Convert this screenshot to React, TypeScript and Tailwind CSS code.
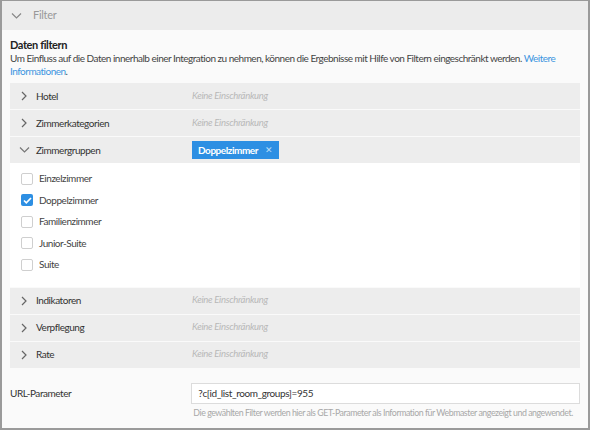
import React from "react";

const font = { fontFamily: "Lato, 'Liberation Sans', sans-serif" };

function ChevronRight() {
  return (
    <svg width="8" height="10" viewBox="0 0 8 10" className="shrink-0">
      <path d="M2 1l4 4-4 4" fill="none" stroke="#666" strokeWidth="1.2" />
    </svg>
  );
}

function ChevronDown({ color = "#666" }: { color?: string }) {
  return (
    <svg width="11" height="8" viewBox="0 0 11 8" className="shrink-0">
      <path d="M1 1.5l4.5 4.5 4.5-4.5" fill="none" stroke={color} strokeWidth="1.2" />
    </svg>
  );
}

function Row({ label, open, children }: { label: string; open?: boolean; children?: React.ReactNode }) {
  return (
    <div className="flex h-[26px] items-center bg-[#ededed]">
      <div className="flex w-[26px] justify-center pl-[2px]">{open ? <ChevronDown color="#777" /> : <ChevronRight />}</div>
      <div className="w-[156px] text-[10px] tracking-[-0.45px] text-[#333]">{label}</div>
      {children ?? <div className="text-[9.5px] italic tracking-[-0.3px] text-[#b8b8b8]">Keine Einschränkung</div>}
    </div>
  );
}

function Check({ label, checked }: { label: string; checked?: boolean }) {
  return (
    <div className="flex h-[21.5px] items-center gap-[6px] pl-[11px]">
      {checked ? (
        <div className="flex h-[12px] w-[12px] items-center justify-center rounded-[2px] bg-[#2d8fe3]">
          <svg width="9" height="7" viewBox="0 0 9 7">
            <path d="M1 3.5l2.3 2.3L8 1" fill="none" stroke="white" strokeWidth="1.7" />
          </svg>
        </div>
      ) : (
        <div className="h-[12px] w-[12px] rounded-[2px] border border-[#cfcfcf] bg-white" />
      )}
      <span className="text-[10px] tracking-[-0.45px] text-[#444]">{label}</span>
    </div>
  );
}

export default function App() {
  return (
    <div style={font} className="flex h-[430px] w-[590px] flex-col overflow-hidden border-x-2 border-t border-b-2 border-[#9a9a9a] bg-[#fafafa]">
      <div className="flex h-[29px] shrink-0 items-center gap-[11px] bg-[#ececec] pl-[9px]">
        <ChevronDown color="#888" />
        <span className="text-[11px] tracking-[-0.3px] text-[#999]">Filter</span>
      </div>
      <div className="px-[8px] pt-[8px]">
        <div className="text-[11px] leading-[13px] font-bold tracking-[-0.4px] text-[#222]">Daten filtern</div>
        <p className="mt-[1px] text-[10px] leading-[12.5px] tracking-[-0.5px] text-[#444]">
          Um Einfluss auf die Daten innerhalb einer Integration zu nehmen, können die Ergebnisse mit Hilfe von Filtern eingeschränkt werden.{" "}
          <span className="text-[#3a95e0]">Weitere Informationen</span>.
        </p>
        <div className="mt-[6px] flex w-[570px] flex-col gap-[1px]">
          <Row label="Hotel" />
          <Row label="Zimmerkategorien" />
          <Row label="Zimmergruppen" open>
            <div className="flex h-[18px] items-center gap-[7px] bg-[#2d8fe3] pl-[6px] pr-[6px] text-[10px] font-bold tracking-[-0.45px] text-white">
              Doppelzimmer
              <span className="text-[9px] font-normal text-[#b9dcf7]">✕</span>
            </div>
          </Row>
          <div className="-mt-[1px] bg-white pt-[5px] pb-[11px]">
            <Check label="Einzelzimmer" />
            <Check label="Doppelzimmer" checked />
            <Check label="Familienzimmer" />
            <Check label="Junior-Suite" />
            <Check label="Suite" />
          </div>
          <Row label="Indikatoren" />
          <Row label="Verpflegung" />
          <Row label="Rate" />
        </div>
        <div className="mt-[15px] flex">
          <div className="flex h-[21px] w-[182px] items-center text-[10px] tracking-[-0.45px] text-[#333]">URL-Parameter</div>
          <div className="flex w-[390px] flex-col">
            <div className="flex h-[21px] items-center border border-[#dcdcdc] bg-white px-[6px] text-[10px] tracking-[-0.4px] text-[#333]">
              ?c[id_list_room_groups]=955
            </div>
            <div className="mt-[2px] whitespace-nowrap pl-[2px] text-[8.8px] tracking-[-0.45px] text-[#a8a8a8]">
              Die gewählten Filter werden hier als GET-Parameter als Information für Webmaster angezeigt und angewendet.
            </div>
          </div>
        </div>
      </div>
    </div>
  );
}
